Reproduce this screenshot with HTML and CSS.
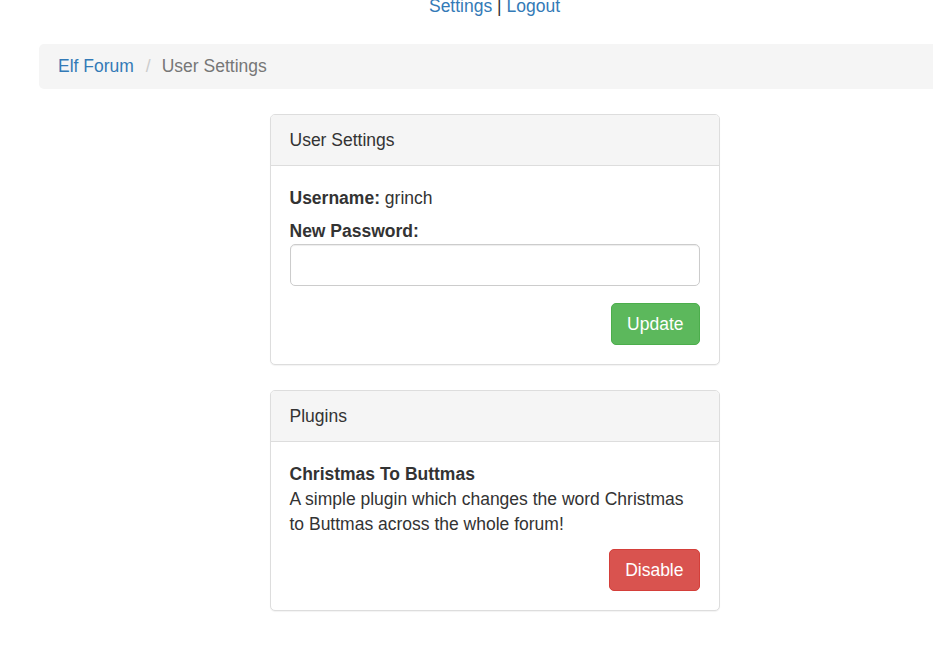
FILE: index.html
```html
<!DOCTYPE html>
<html lang="en">
<head>
<meta charset="utf-8">
<title>User Settings - Elf Forum</title>
<link rel="stylesheet" href="styles.css">
</head>
<body>
<div class="page">
  <div class="topnav"><a href="#">Settings</a> | <a href="#">Logout</a></div>
  <ol class="breadcrumb">
    <li><a href="#">Elf Forum</a></li>
    <li class="sep">/</li>
    <li class="active">User Settings</li>
  </ol>
  <div class="panel">
    <div class="panel-heading">User Settings</div>
    <div class="panel-body">
      <p class="username"><b>Username:</b> grinch</p>
      <label class="label" for="pw">New Password:</label>
      <input class="input" id="pw" type="password">
      <div class="actions"><button class="btn btn-success">Update</button></div>
    </div>
  </div>
  <div class="panel">
    <div class="panel-heading">Plugins</div>
    <div class="panel-body">
      <div class="plugin-title">Christmas To Buttmas</div>
      <div class="plugin-desc">A simple plugin which changes the word Christmas to Buttmas across the whole forum!</div>
      <div class="actions actions-plugin"><button class="btn btn-danger">Disable</button></div>
    </div>
  </div>
</div>
</body>
</html>
```

FILE: styles.css
```css
html, body {
  margin: 0;
  padding: 0;
  background: #fff;
}
body {
  overflow-x: hidden;
  font-family: "Liberation Sans", Arial, sans-serif;
  font-size: 17.5px;
  line-height: 25px;
  color: #333;
}
a {
  color: #337ab7;
  text-decoration: none;
}
.page {
  width: 989px;
  display: flex;
  flex-direction: column;
  align-items: center;
}
.topnav {
  margin-top: -6px;
  text-align: center;
}
.breadcrumb {
  align-self: stretch;
  display: flex;
  list-style: none;
  margin: 25px 39px 25px 39px;
  padding: 10px 19px;
  background: #f5f5f5;
  border-radius: 5px;
}
.breadcrumb .sep {
  color: #ccc;
  padding: 0 11px 0 12px;
}
.breadcrumb .active {
  color: #777;
}
.panel {
  width: 450px;
  box-sizing: border-box;
  border: 1px solid #ddd;
  border-radius: 5px;
  margin-bottom: 25px;
  background: #fff;
  box-shadow: 0 1px 1px rgba(0,0,0,0.05);
}
.panel-heading {
  padding: 12.5px 19px;
  background: #f5f5f5;
  border-bottom: 1px solid #ddd;
  border-radius: 4px 4px 0 0;
}
.panel-body {
  padding: 20px 19px 19px 19px;
  display: flex;
  flex-direction: column;
}
.username {
  margin: 0 0 8px 0;
}
.label {
  font-weight: bold;
  margin-bottom: 0;
}
.input {
  height: 42px;
  box-sizing: border-box;
  border: 1px solid #ccc;
  border-radius: 5px;
  padding: 7px 15px;
  font: inherit;
  box-shadow: inset 0 1px 1px rgba(0,0,0,0.075);
  margin: 0;
}
.actions {
  display: flex;
  justify-content: flex-end;
  margin-top: 17px;
}
.actions-plugin {
  margin-top: 12px;
}
.plugin-title {
  font-weight: bold;
}
.btn {
  font-family: inherit;
  font-size: 17.5px;
  line-height: 25px;
  padding: 7.5px 15px;
  border-radius: 5px;
  border: 1px solid transparent;
  color: #fff;
  cursor: pointer;
}
.btn-success {
  background: #5cb85c;
  border-color: #4cae4c;
}
.btn-danger {
  background: #d9534f;
  border-color: #d43f3a;
}
```
